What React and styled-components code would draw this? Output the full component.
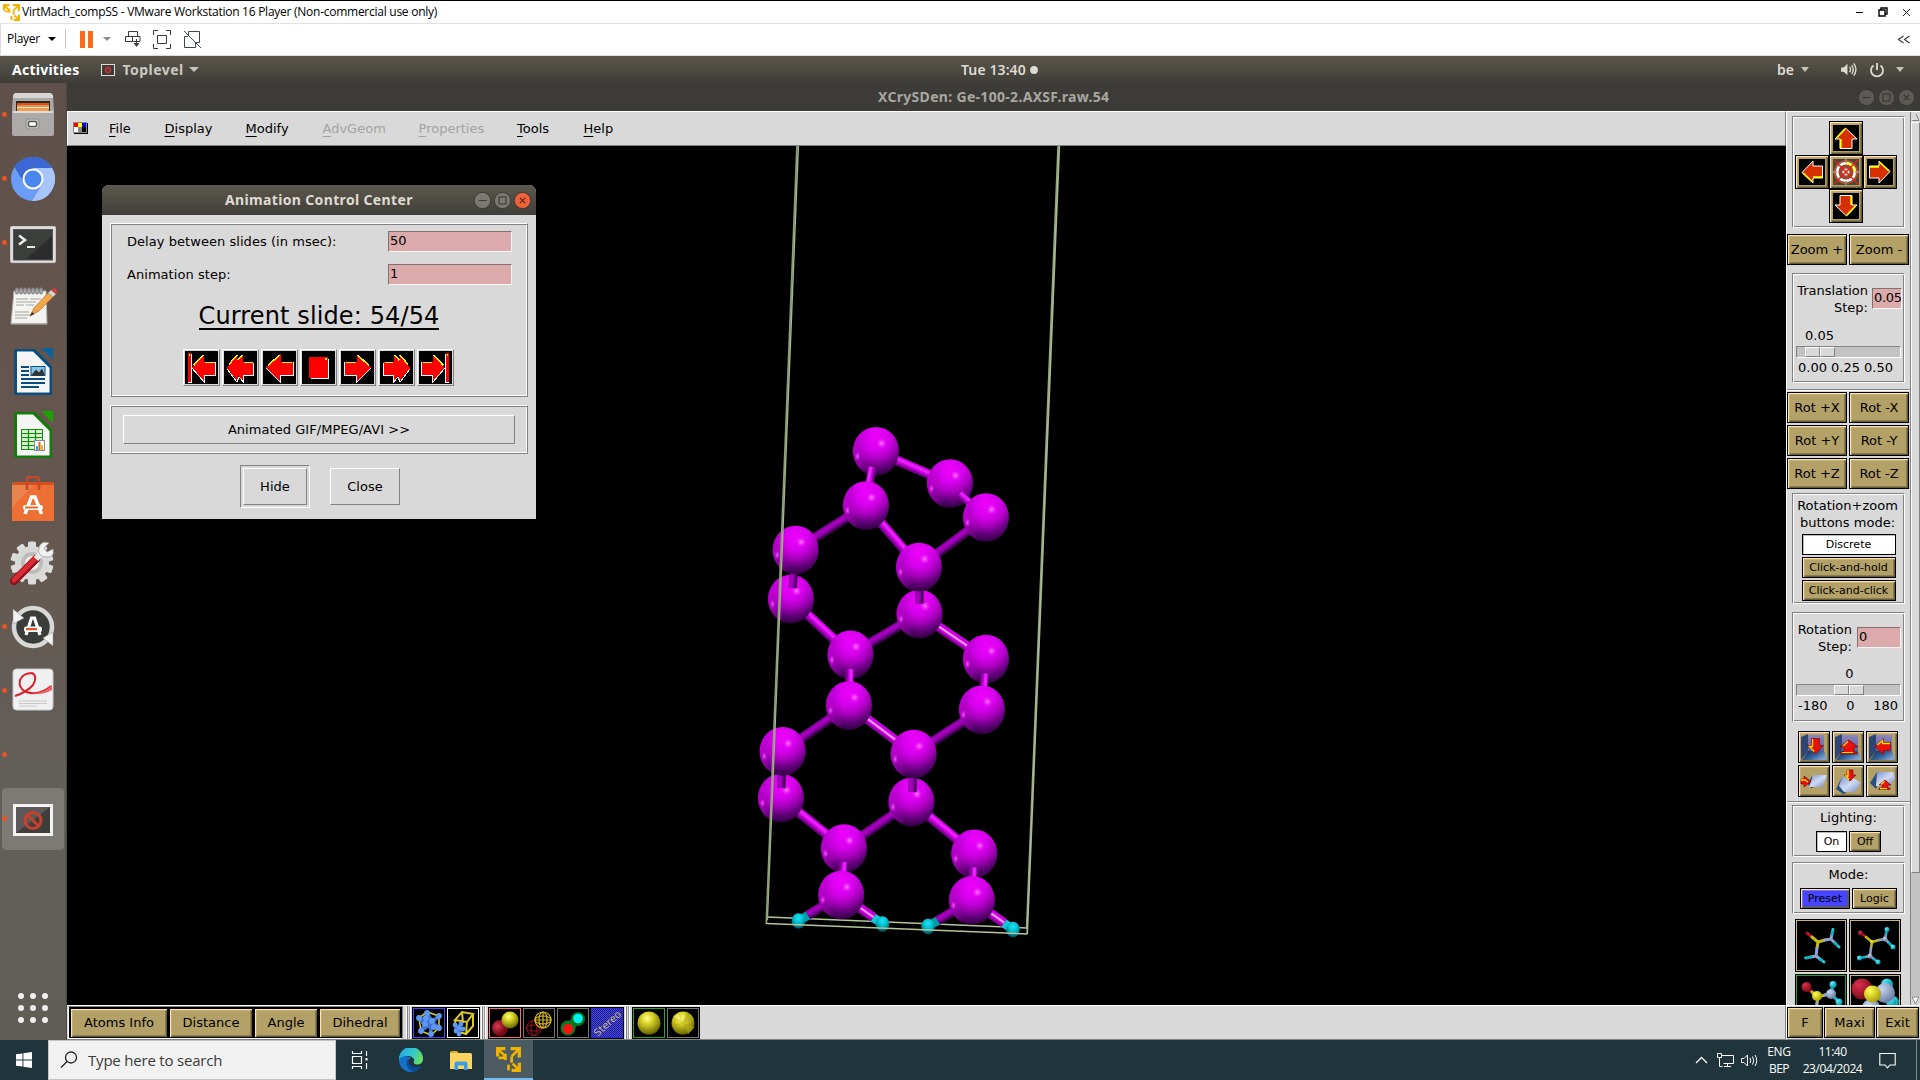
import React from "react";
import styled, { createGlobalStyle, css } from "styled-components";

const Global = createGlobalStyle`
  * { box-sizing: border-box; }
  html, body { margin: 0; padding: 0; width: 1920px; height: 1080px; overflow: hidden; background: #000; }
  svg { display: block; flex: none; }
`;

const GREY = "#d9d9d9";
const GOLD = "#b3a168";
const dejavu = `"DejaVu Sans", sans-serif`;
const segoe = `"Open Sans", "Noto Sans", sans-serif`;
const ubuntu = `"Noto Sans", "Open Sans", sans-serif`;

const Screen = styled.div`
  width: 1920px; height: 1080px; display: flex; flex-direction: column;
  border-top: 1px solid #000; font-family: ${dejavu}; font-size: 13px; color: #000; overflow: hidden;
`;
const Text = styled.span`
  font-size: ${(p) => p.$size || 13}px; letter-spacing: ${(p) => p.$ls || 0}px; white-space: pre;
  font-weight: ${(p) => p.$w || 400}; line-height: 1; color: ${(p) => p.$c || "inherit"};
  margin-left: ${(p) => p.$ml || 0}px;
`;

/* ---------- VMware host window ---------- */
const HostTitle = styled.div`
  height: 23px; flex: none; background: #fff; border-bottom: 1px solid #e2e2e2; display: flex; align-items: center;
  padding-left: 3px; font-family: ${segoe}; gap: 2px;
`;
const HostControls = styled.div`
  margin-left: auto; display: flex; align-items: center; gap: 14px; padding-right: 9px;
`;
const HostBar = styled.div`
  height: 32px; flex: none; background: #fff; border-bottom: 1px solid #dcdcdc; border-left: 1px solid #dcdcdc;
  display: flex; align-items: center; padding: 0 9px 1px 6px; font-family: ${segoe};
`;
const Caret = styled.i`
  width: 0; height: 0; border-left: ${(p) => p.$s || 4}px solid transparent; border-right: ${(p) => p.$s || 4}px solid transparent;
  border-top: ${(p) => p.$h || p.$s || 4}px solid ${(p) => p.$c || "#000"}; margin-left: ${(p) => p.$ml || 0}px; flex: none;
`;
const HostDivider = styled.div`width: 1px; height: 20px; background: #c8c8c8; margin: 0 14px 0 9px;`;
const PauseIcon = styled.div`width: 13px; height: 17px; border-left: 5px solid #ff6a1a; border-right: 5px solid #ff6a1a;`;
const HostIcon = styled.div`margin-left: ${(p) => p.$ml}px;`;
const HostExpand = styled.div`margin-left: auto;`;

/* ---------- Ubuntu shell ---------- */
const TopBar = styled.div`
  height: 27px; flex: none; background: linear-gradient(#5a564c, #3f3d38); display: grid;
  grid-template-columns: 961px 1fr auto; align-items: center; font-family: ${ubuntu}; color: #dfdbd2;
`;
const TopGroup = styled.div`display: flex; align-items: center; height: 100%; padding-right: ${(p) => p.$pr || 0}px;`;
const AppBadge = styled.svg`margin: 0 8px 0 21px;`;
const Guest = styled.div`height: 957px; flex: none; display: flex;`;
const Dock = styled.div`
  width: 67px; flex: none; background: linear-gradient(#60504b, #65564f 40%, #625f59 75%, #605d57);
  border-right: 1px solid #4a4642; display: flex; flex-direction: column; align-items: center;
`;
const DockItem = styled.div`
  width: 62px; height: 62px; margin: 1px 0; flex: none; border-radius: 4px; display: flex; align-items: center;
  justify-content: center; position: relative; background: ${(p) => (p.$active ? "#7d7974" : "transparent")};
  padding-top: ${(p) => Math.max(0, p.$dy || 0) * 2}px; padding-bottom: ${(p) => Math.max(0, -(p.$dy || 0)) * 2}px;
  ${(p) => p.$run && css`
    &::before { content: ""; position: absolute; left: 0; top: 28px; width: 5px; height: 5px; border-radius: 50%; background: #e95420; }
  `}
`;
const AppGrid = styled.div`
  display: grid; grid-template-columns: repeat(3, 6px); gap: 6px; margin: auto 0 17px;
`;
const Dot = styled.i`width: 6px; height: 6px; border-radius: 50%; background: #f0efed;`;

const MainWindow = styled.div`flex: 1; display: flex; flex-direction: column; min-width: 0;`;
const WinTitle = styled.div`
  height: 28px; flex: none; background: #3c3b37; display: grid; grid-template-columns: 811px 1fr auto;
  align-items: center; font-family: ${ubuntu}; color: #a9a79f; padding-right: 5px;
`;
const Circles = styled.div`display: flex; gap: 3px;`;
const WinBody = styled.div`flex: 1; display: flex; min-height: 0; background: ${GREY};`;
const Left = styled.div`width: 1719px; flex: none; display: flex; flex-direction: column;`;
const MenuBar = styled.div`
  height: 35px; flex: none; border: 1px solid; border-color: #fff #828282 #828282 #fff; background: ${GREY};
  display: flex; align-items: center; padding: 0 0 1px 5px;
`;
const MenuItem = styled.span`
  display: block; margin-left: ${(p) => p.$ml}px; width: ${(p) => p.$width}px; white-space: nowrap; line-height: 17px;
  color: ${(p) => (p.$off ? "#a3a3a3" : "#000")};
  &::first-letter { text-decoration: underline; text-underline-offset: 3px; text-decoration-thickness: 1px; }
`;
const Canvas = styled.div`height: 859px; flex: none; background: #000; position: relative;`;
const BottomBar = styled.div`
  height: 35px; flex: none; background: ${GREY}; border-top: 1px solid #fff; border-bottom: 1px solid #828282;
  border-right: 1px solid #828282; display: flex; align-items: flex-start;
`;
const InfoGroup = styled.div`
  display: flex; gap: 1px; border: 1px solid; border-color: #828282 #828282 #fff #fff; background: #000; height: 33px;
  padding: 1px; margin-left: 1px;
`;
const bevel = css`
  border: 1px solid #000; box-shadow: inset 1px 1px #ffe2b0, inset 2px 2px #e3c88e55, inset -1px -1px #665b36, inset -2px -2px #665b3688;
`;
const Gold = styled.div`
  ${bevel}
  background: ${(p) => p.$bg || GOLD}; width: ${(p) => p.$width}px; height: ${(p) => p.$h || 31}px; flex: none;
  display: flex; align-items: center; justify-content: center; font-size: ${(p) => p.$size || 13}px; white-space: nowrap; line-height: 1;
  padding-bottom: 1px;
  ${(p) => p.$flat && css`box-shadow: inset 1px 1px ${p.$flat}, inset -1px -1px #fff;`}
`;
const IconBtn = styled(Gold)`padding: 0; overflow: hidden;`;
const VSep = styled.div`
  width: 5px; height: 33px; margin: 0 ${(p) => p.$mr || 2}px 0 ${(p) => p.$ml || 2}px; flex: none;
  border-left: 1px solid #fff; border-right: 1px solid #fff; box-shadow: inset 1px 0 #828282, inset -1px 0 #a0a0a0;
`;
const ToolIcon = styled.div`
  width: 34px; height: 32px; margin-top: 1px; flex: none; background: ${(p) => p.$bg || "#000"}; border: 1px solid #000; outline: 1px solid ${(p) => p.$line || "#777"};
  outline-offset: -2px; display: flex; align-items: center; justify-content: center; overflow: hidden;
`;

/* ---------- Right panel ---------- */
const Right = styled.div`width: 134px; flex: none; display: flex; flex-direction: column;`;
const PanelRow = styled.div`
  height: 894px; display: flex; flex: none; overflow: hidden; border-top: 1px solid #fff;
`;
const Panel = styled.div`
  width: 125px; flex: none; border-left: 1px solid #fff; border-right: 1px solid #828282; display: flex; flex-direction: column;
`;
const Groove = styled.div`
  width: 113px; height: ${(p) => p.$h}px; margin: ${(p) => p.$mt}px 0 0 5px; flex: none; border: 1px solid;
  border-color: #828282 #fff #fff #828282; box-shadow: inset 1px 1px #fff, inset -1px -1px #828282;
  display: flex; flex-direction: column; align-items: center; padding-top: ${(p) => p.$pt || 0}px;
`;
const NavPad = styled.div`
  display: grid; grid-template-columns: repeat(3, 34px); grid-auto-rows: 34px; align-self: flex-start; margin-left: 2px;
`;
const NavBtn = styled.div`
  ${bevel}
  grid-area: ${(p) => p.$area}; background: ${GOLD}; display: flex; align-items: center; justify-content: center;
`;
const Rot = styled.div`transform: rotate(${(p) => p.$deg}deg);`;
const Pair = styled.div`display: flex; gap: 2px; margin-top: ${(p) => p.$mt || 0}px; flex: none;`;
const HSep = styled.div`height: 2px; flex: none; margin-top: ${(p) => p.$mt}px; border-top: 1px solid #828282; border-bottom: 1px solid #fff;`;
const StepRow = styled.div`display: flex; width: 107px; justify-content: space-between; align-items: center; padding-right: ${(p) => p.$pr || 0}px;`;
const StepLabel = styled.div`text-align: right; line-height: 17px; width: ${(p) => p.$width}px; padding-top: 1px;`;
const Caption = styled.div`
  text-align: center; line-height: 17px; white-space: nowrap; align-self: stretch;
  padding: 0 ${(p) => p.$pr || 0}px 0 ${(p) => p.$pl || 0}px; margin-top: ${(p) => p.$mt || 0}px;
`;
const Entry = styled.div`
  width: ${(p) => p.$width}px; height: 21px; background: #dcaaaa; border: 1px solid; border-color: #857070 #fff3f3 #fff3f3 #857070;
  padding-left: 1px; line-height: 18px; overflow: hidden; white-space: nowrap; flex: none; letter-spacing: ${(p) => p.$ls || 0}px;
`;
const Trough = styled.div`
  width: 105px; height: 12px; background: #c3c3c3; border: 1px solid; border-color: #828282 #fff #fff #828282; flex: none;
  padding-left: ${(p) => p.$at}px; display: flex; margin-top: 2px;
`;
const Knob = styled.i`
  width: 15px; height: 10px; background: ${GREY}; border: 1px solid; border-color: #fff #828282 #828282 #fff;
`;
const Ticks = styled.div`display: flex; width: ${(p) => p.$width}px; justify-content: space-between; align-self: flex-start; margin: 1px 0 0 5px; line-height: 17px;`;
const Stack = styled.div`display: flex; flex-direction: column; gap: 2px; margin-top: 3px;`;
const IconGrid = styled.div`display: grid; grid-template-columns: repeat(3, 32px); gap: 2px; margin: 9px 0 0 11px;`;
const MolGrid = styled.div`display: grid; grid-template-columns: 52px 52px; gap: 2px; margin: 5px 0 0 8px;`;
const MolCell = styled.div`
  width: 52px; height: 53px; background: #000; border: 1px solid #000; outline: 1px solid ${(p) => p.$line || "#c8b184"}; outline-offset: -2px;
`;
const Scroll = styled.div`width: 9px; flex: none; background: #c3c3c3; display: flex; flex-direction: column; height: 893px; justify-content: space-between;`;
const Thumb = styled.div`height: 751px; background: ${GREY}; border: 1px solid; border-color: #fff #828282 #828282 #fff;`;
const ExitRow = styled.div`
  height: 35px; border-top: 1px solid #fff; border-left: 1px solid #fff; border-bottom: 1px solid #828282; display: flex; gap: 1px;
  padding-top: 1px;
`;

/* ---------- Dialog ---------- */
const Dialog = styled.div`
  position: absolute; left: 35px; top: 39px; width: 434px; height: 334px; background: ${GREY}; border-radius: 7px 7px 0 0;
  display: flex; flex-direction: column; align-items: center; overflow: hidden; letter-spacing: 0.05px;
`;
const DialogTitle = styled.div`
  height: 30px; width: 100%; flex: none; background: linear-gradient(#5c584e, #403e39); display: grid; grid-template-columns: 123px 1fr auto;
  align-items: center; font-family: ${ubuntu}; color: #dfdbd2; padding-right: 5px;
`;
const Ridge = styled.div`
  width: 418px; height: ${(p) => p.$h}px; margin-top: 8px; flex: none; border: 1px solid; border-color: #fff #828282 #828282 #fff;
  box-shadow: inset 1px 1px #828282, inset -1px -1px #fff; display: flex; flex-direction: column; align-items: center; padding-top: ${(p) => p.$pt}px;
`;
const Field = styled.div`
  width: 386px; padding-left: 1px; display: flex; justify-content: space-between; align-items: center; margin-bottom: 12px; height: 21px;
`;
const Current = styled.div`
  font-size: 24px; line-height: 28px; height: 28px; margin-top: 5px; border-bottom: 2px solid #000; white-space: nowrap; letter-spacing: 0.12px;
`;
const Player = styled.div`display: flex; gap: 2px; margin-top: 19px; padding-right: 2px;`;
const Raised = styled.div`
  border: 1px solid; border-color: #fff #828282 #828282 #fff; width: ${(p) => p.$width}px; height: ${(p) => p.$h}px;
  display: flex; align-items: center; justify-content: center; background: ${GREY}; flex: none; padding-bottom: ${(p) => p.$pb || 0}px;
`;
const DefaultRing = styled.div`
  width: 70px; height: 43px; border: 1px solid; border-color: #828282 #fff #fff #828282; display: flex; align-items: center; justify-content: center;
`;
const DialogActions = styled.div`display: flex; gap: 20px; align-items: center; width: 100%; padding-left: 138px; margin-top: 11px;`;

/* ---------- Windows taskbar ---------- */
const Taskbar = styled.div`
  height: 40px; flex: none; background: #20343b; display: flex; font-family: ${segoe}; color: #fff; align-items: stretch;
`;
const TaskCell = styled.div`
  width: ${(p) => p.$width || 48}px; display: flex; align-items: center; justify-content: center; flex: none;
  ${(p) => p.$on && css`background: #4b5b61; border-bottom: 2px solid #76b9ed;`}
`;
const Search = styled.div`
  width: 288px; background: #f2f2f2; border: 1px solid #c6c6c6; display: flex; align-items: center; gap: 10px; padding-left: 11px; color: #3a3a3a; flex: none;
`;
const Tray = styled.div`margin-left: auto; display: flex; align-items: center; padding-right: 3px;`;
const TrayCell = styled.div`
  width: ${(p) => p.$width}px; display: flex; flex-direction: column; align-items: center; gap: 5px; flex: none; justify-content: center;
`;
const ShowDesk = styled.div`width: 1px; height: 40px; background: #7b888c; margin-left: 9px;`;

/* ---------- drawings ---------- */
const VmLogo = ({ size }) => (
  <svg width={size} height={size} viewBox="0 0 24 24" fill="none" stroke="#f0b400" strokeWidth="3.2">
    <path d="M1.6 9V1.6H9M14 1.6h8.4V10M22.4 15v7.4H15" />
    <path d="M2 2l7 7M22 2l-7 7M22 22l-6-6M9 12.5V6.5M8 10.5H2.5M15 9v6" strokeWidth="2.6" />
    <path d="M12 17v5.5" strokeWidth="2.6" />
  </svg>
);

const WinCircle = ({ kind, bg, fg }) => (
  <svg width="17" height="17" viewBox="0 0 17 17">
    <circle cx="8.5" cy="8.5" r="8.1" fill={bg} stroke="#33322e" strokeWidth=".8" />
    <g stroke={fg} fill="none" strokeWidth="1.1">
      {kind === "min" && <path d="M4.5 8.5h8" />}
      {kind === "max" && <rect x="5" y="5" width="7" height="7" />}
      {kind === "close" && <path d="M5.8 5.8l5.4 5.4M11.2 5.8l-5.4 5.4" />}
    </g>
  </svg>
);

const Speaker = () => (
  <svg width="17" height="17" viewBox="0 0 16 16">
    <path d="M1 6h2.5L7 2.5v11L3.5 10H1z" fill="#dfdbd2" />
    <path d="M9 5.500q2 2.500 0 5M11 3.800q3 4.200 0 8.400M13 2.200q4 5.800 0 11.600" fill="none" stroke="#dfdbd2" strokeWidth="1.3" />
  </svg>
);

const arrowPaths = {
  one: { p: "3,16.5 17.5,3 17.5,10.5 29.5,10.5 29.5,24 17.5,24 17.5,31", y: "M5 14.5L16.5 4M18.5 11.5H28.5", w: "M3 17l14.5 14.5V24.5H30V11" },
  two: { p: "3,17 13,3.5 13,10 19,3.5 19,11 29,11 29,24 19,24 19,30 14.5,25 13.5,30", y: "M5 13.5L13 4M13.5 9.5L18.5 4M20 11.5H28.5", w: "M3 18l10 13 2-5 4.5 5V24.5H29.5V12" },
  end: { p: "7.5,16.5 19,3 19,10.5 30,10.5 30,24 19,24 19,31", y: "M8.5 14.5L18.5 4M20 11.5H29.5", w: "M7 17l12.5 14.5V24.5H30.5V11" },
};
const PlayArrow = ({ kind, flip }) => {
  const a = arrowPaths[kind];
  return (
    <svg width="33" height="33" viewBox="0 0 33 33" shapeRendering="crispEdges">
      <rect width="33" height="33" fill="#000" />
      {kind === "stop" ? (
        <g>
          <path d="M26.5 8V27.5H8.5" stroke="#fff" fill="none" strokeWidth="1.5" />
          <rect x="7" y="6" width="19" height="21" fill="#fe0000" />
          <rect x="23" y="7" width="2" height="2" fill="#ff0" />
        </g>
      ) : (
        <g transform={flip ? "translate(33 0) scale(-1 1)" : undefined}>
          {kind === "end" && (
            <g>
              <rect x="3" y="2" width="3" height="29" fill="#fe0000" />
              <path d="M6.5 3V31.5H3" stroke="#fff" fill="none" />
              <rect x="4" y="3" width="1" height="2" fill="#ff0" />
            </g>
          )}
          <polygon points={a.p} fill="#fe0000" />
          <path d={a.w} stroke="#fff" fill="none" />
          <path d={a.y} stroke="#ff0" fill="none" strokeWidth="1.5" />
        </g>
      )}
    </svg>
  );
};

const NavArrow = () => (
  <svg width="26" height="26" viewBox="4 4 26 26">
    <rect x="4" y="4" width="26" height="26" fill="#000" />
    <polygon points="16.5,7 6,18 11,18 11,27.5 23,27.5 23,18 28,18" fill="#d63000" stroke="#fff" strokeWidth="1" />
    <path d="M16 8L7.5 17M11.8 18V27" stroke="#ff0" strokeWidth="1.7" />
  </svg>
);
const Target = () => (
  <svg width="26" height="26" viewBox="0 0 26 26">
    <rect width="26" height="26" fill="#4a4438" />
    <circle cx="13" cy="13" r="11.5" fill="#77705f" stroke="#d63a20" strokeWidth="1.2" />
    <circle cx="13" cy="13" r="8.8" fill="none" stroke="#fff" strokeWidth="2.6" />
    <path d="M13 4.200a8.800 8.800 0 0 1 8.800 8.800" fill="none" stroke="#ff3" strokeWidth="2.6" />
    <circle cx="13" cy="13" r="6.6" fill="#6a6252" stroke="#d02a18" strokeWidth="1.3" />
    <circle cx="13" cy="13" r="4.2" fill="#eee8dd" stroke="#d02a18" strokeWidth="1.3" />
    <path d="M1 1l24 24M25 1L1 25" stroke="#d02a18" strokeWidth="1.6" />
    <path d="M13 0v4M13 22v4M0 13h4M22 13h4" stroke="#999" strokeWidth="1.3" />
  </svg>
);

const RoomIcon = ({ dir }) => (
  <svg width="26" height="26" viewBox="0 0 26 26">
    <defs>
      <linearGradient id="floor" x1="0" y1="0" x2="1" y2=".6"><stop offset="0" stopColor="#0e2444" /><stop offset=".6" stopColor="#38649c" /><stop offset="1" stopColor="#7fa4d4" /></linearGradient>
      <linearGradient id="wall" x1="0" y1="0" x2="0" y2="1"><stop offset="0" stopColor="#8a88bd" /><stop offset="1" stopColor="#5c5c98" /></linearGradient>
    </defs>
    <path d="M0 3L7 0V17L0 26z" fill="#2d4674" />
    <path d="M7 1H23V18H7z" fill="url(#wall)" />
    <path d="M7 17H23L26 26H1z" fill="url(#floor)" />
    {dir === "up" ? (
      <g>
        <path d="M14 6l9 7h-4v5h3v2H6v-2h3v-5H5z" fill="#e8120a" stroke="#600" strokeWidth=".6" />
        <path d="M13 7.500l-5 4.500M7 18.500h11" stroke="#ffe000" strokeWidth="1.100" fill="none" />
      </g>
    ) : (
      <g transform={dir === "left" ? "rotate(90 14 12)" : undefined}>
        <path d="M10.500 4.500h8v7h4l-8 8.500-8-8.500h4z" fill="#e8120a" stroke="#700" strokeWidth=".6" />
        <path d="M11.500 5v7.500H8.500l4.500 5" stroke="#ffe000" strokeWidth="1.300" fill="none" />
      </g>
    )}
  </svg>
);
const SlabIcon = ({ kind }) => (
  <svg width="28" height="26" viewBox="0 0 28 26">
    <defs>
      <linearGradient id="slab" x1="0" y1="0" x2="1" y2="1"><stop offset="0" stopColor="#7e94cc" /><stop offset=".5" stopColor="#cfdaf4" /><stop offset="1" stopColor="#6f86bc" /></linearGradient>
    </defs>
    {kind === "right" && <g><path d="M12 8l-4 8 3 4 3-1z" fill="#1d3558" /><path d="M13 7h14l-4 12H9z" fill="url(#slab)" /></g>}
    {kind === "down" && <g><path d="M8 9L2 21l7 5 3-1z" fill="#27507c" /><path d="M8 9h10l9 6-6 9H10l-5-6z" fill="url(#slab)" /></g>}
    {kind === "up" && <g><path d="M9 4L2 15l6 6 3-7z" fill="#27507c" /><path d="M9 4h16l2 6-5 8H8z" fill="url(#slab)" /></g>}
    {kind === "right" && <g><path d="M1 11h3V8l7 5.500-7 5.500v-3H1z" fill="#e8120a" stroke="#700" strokeWidth=".6" /><path d="M1 12h4l3 2" stroke="#ffe000" strokeWidth="1.300" fill="none" /></g>}
    {kind === "down" && <g><path d="M13 2h6v5h3l-6 6-6-6h3z" fill="#e8120a" stroke="#700" strokeWidth=".6" /><path d="M14 2v6h-2l3 3.500" stroke="#ffe000" strokeWidth="1.500" fill="none" /></g>}
    {kind === "up" && <g><path d="M11 17l6-5 6 5h-3v3h2v1.500H11V20h3v-3z" fill="#e8120a" stroke="#700" strokeWidth=".6" /><path d="M13 16.500l3.500-3M12 20.700h7" stroke="#ffe000" strokeWidth="1.300" /></g>}
  </svg>
);

const Ball = ({ x, y, r, c }) => <circle cx={x} cy={y} r={r} fill={`url(#mb-${c})`} />;
const MolIcon = ({ s }) => {
  const tip = [1.2, 2.5, 3.5, 6][s];
  return (
    <svg width="50" height="51" viewBox="0 0 50 51">
      <defs>
        {[["red", "#d8304c", "#7a0818"], ["yel", "#ffff50", "#a89c08"], ["blu", "#c8d6f2", "#6478a0"], ["cya", "#60f4ff", "#008ca0"]].map(([n, a, b]) => (
          <radialGradient id={"mb-" + n} key={n} cx=".35" cy=".3" r=".75"><stop offset="0" stopColor={a} /><stop offset="1" stopColor={b} /></radialGradient>
        ))}
      </defs>
      <g strokeWidth={s === 1 ? 2.5 : 3} strokeLinecap="round" fill="none">
        <path d="M11 13L16 17" stroke="#b0142c" /><path d="M16 17L22 22 21 28M22 22L29 20" stroke="#c6bb14" />
        <path d="M21 28L20 36M29 20L35 19M20 36L15 37M20 36L24 39M35 19L36 14M35 19L39 23" stroke="#8fa4d0" />
        <path d="M15 37L10 38M24 39L28 42M36 14L37 9.500M39 23L43 27" stroke="#10b4c4" />
      </g>
      <Ball x={37} y={9.5} r={tip} c="cya" /><Ball x={43} y={27} r={tip} c="cya" /><Ball x={9.5} y={38} r={tip} c="cya" /><Ball x={28} y={42} r={tip} c="cya" />
      {s === 3 && (
        <g><Ball x={41} y={27} r={5} c="cya" /><Ball x={36} y={11} r={5} c="cya" /><Ball x={35} y={18} r={10} c="blu" /><Ball x={12} y={14} r={10.5} c="red" /><Ball x={21} y={33} r={9} c="blu" /><Ball x={22.5} y={19} r={8.5} c="yel" /></g>
      )}
      {s === 2 && <g><Ball x={10.5} y={12} r={5} c="red" /><Ball x={35} y={19} r={5} c="blu" /><Ball x={21} y={21} r={5} c="yel" /><Ball x={20} y={36} r={5} c="blu" /></g>}
      {s === 1 && <g><Ball x={10.5} y={13} r={2.5} c="red" /><Ball x={35} y={19} r={2.5} c="blu" /><Ball x={22} y={22} r={2} c="yel" /><Ball x={20} y={36} r={2.5} c="blu" /></g>}
    </svg>
  );
};

/* Atoms and bonds of the slab, in screen pixels */
const atoms = {
  A: [876, 451.3], B: [950, 483.5], C: [986, 517.5], D: [866, 505.5], E: [795.7, 550], F: [919, 567], G: [791, 599], H: [919.5, 614],
  I: [850.5, 654.7], J: [986, 659], K: [849, 705.5], L: [982, 709.7], M: [782.7, 751.3], N: [913.7, 754], O: [781, 798], P: [911.5, 802],
  Q: [844, 848.5], R: [974.3, 853.7], S: [841.3, 895], T: [972, 900.3],
};
const hydrogens = [[798.5, 921, "S", 0], [882.5, 924, "S", 1], [928, 926.5, "T", 0], [1013, 929.5, "T", 1]];
const backBonds = [["A", "B", 1], ["D", "E", 0], ["D", "F", 1], ["C", "F", 0], ["G", "I", 1], ["H", "I", 0], ["H", "J", 2], ["K", "M", 0], ["K", "N", 2], ["L", "N", 0], ["O", "Q", 1], ["P", "Q", 0], ["P", "R", 1]];
/* [atom whose face the bond crosses, atom that hides its other end, inner start, tone] */
const frontBonds = [
  ["A", "D", [872.5, 467], 1], ["B", "C", [959.5, 494], 1], ["G", "E", [792.7, 588], 0], ["H", "F", [919.8, 603.5], 0], ["I", "K", [849.5, 669], 1],
  ["J", "L", [984.3, 673.5], 1], ["O", "M", [781.5, 788], 0], ["P", "N", [912.5, 792], 0], ["Q", "S", [843, 862], 1], ["R", "T", [973, 867.5], 1],
];
const tones = [["#470058", "#8600a0", "#a800be"], ["#7a0090", "#c400da", "#ea20ff"], ["#8a009c", "#d000e4", "#f79cff"]];
const Bond = ({ a, b, tone, w = 9.5 }) => {
  const [d, m, l] = tones[tone];
  const len = Math.hypot(b[0] - a[0], b[1] - a[1]);
  let nx = (b[1] - a[1]) / len, ny = -(b[0] - a[0]) / len;
  if (ny > 0.1) { nx = -nx; ny = -ny; }
  const seg = (o, c, sw) => (
    <line x1={a[0] + nx * o} y1={a[1] + ny * o} x2={b[0] + nx * o} y2={b[1] + ny * o} stroke={c} strokeWidth={sw} />
  );
  return <g>{seg(0, d, w)}{seg(1.2, m, w - 2.5)}{seg(tone === 2 ? 0.5 : 1.6, l, tone === 2 ? 2 : 3)}</g>;
};
const Atom = ({ c: [x, y] }) => (
  <g>
    <ellipse cx={x} cy={y} rx="23" ry="24.3" fill="url(#ge)" />
    <ellipse cx={x} cy={y} rx="23" ry="24.3" fill="url(#geSide)" />
    <circle cx={x + 5.5} cy={y - 8} r="5.5" fill="url(#geSpot)" />
    <ellipse cx={x - 18.5} cy={y + 5} rx="3" ry="5" fill="url(#geSpot)" opacity=".8" />
  </g>
);
const Crystal = () => (
  <svg width="1719" height="859" viewBox="67 146 1719 859">
    <defs>
      <radialGradient id="ge" cx=".5" cy=".22" r=".8">
        <stop offset="0" stopColor="#ee00fc" /><stop offset=".34" stopColor="#d800ee" /><stop offset=".56" stopColor="#ac00c0" />
        <stop offset=".78" stopColor="#62007a" /><stop offset="1" stopColor="#2c003c" />
      </radialGradient>
      <linearGradient id="geSide"><stop offset="0" stopColor="#c400da" stopOpacity=".8" /><stop offset=".35" stopColor="#b000c4" stopOpacity="0" /></linearGradient>
      <radialGradient id="geSpot"><stop offset="0" stopColor="#ff80ff" /><stop offset="1" stopColor="#f010ff" stopOpacity="0" /></radialGradient>
      <radialGradient id="hy" cx=".5" cy=".3" r=".7"><stop offset="0" stopColor="#20e4f4" /><stop offset=".5" stopColor="#00bccc" /><stop offset="1" stopColor="#004c5c" /></radialGradient>
    </defs>
    <g stroke="#94a57c" strokeWidth="1.5">
      <path d="M767.5 917L1027 928" stroke="#b4c69a" /><path d="M1058 146L1026.5 929" />
    </g>
    {backBonds.map(([a, b, t]) => <Bond key={a + b} a={atoms[a]} b={atoms[b]} tone={t} />)}
    {hydrogens.map(([x, y, o, t]) => {
      const s = atoms[o];
      const q = [x + (s[0] - x) * 0.22, y + (s[1] - y) * 0.22];
      return (
        <g key={x}>
          <Bond a={s} b={q} tone={t * 2} />
          <line x1={q[0]} y1={q[1]} x2={x} y2={y} stroke={t ? "#10c8d8" : "#009cac"} strokeWidth="9" />
          <ellipse cx={x} cy={y} rx="6.8" ry="7.8" fill="url(#hy)" />
        </g>
      );
    })}
    {frontBonds.map(([over, hide, p, t]) => (
      <g key={over + hide}>
        <Atom c={atoms[over]} />
        <Bond a={p} b={atoms[hide]} tone={t} w={8} />
      </g>
    ))}
    {["D", "C", "E", "F", "K", "L", "M", "N", "S", "T"].map((k) => <Atom key={k} c={atoms[k]} />)}
    <g strokeWidth="1.5" fill="none">
      <path d="M798.300 146L767.300 920" stroke="#a9ba92" />
      <path d="M797 146L766.300 924" stroke="#8c9f78" strokeWidth="1.8" />
      <path d="M1059.300 146L1027.200 934" stroke="#a9ba92" strokeWidth="1.8" />
      <path d="M766.500 923.500L1027.500 934" stroke="#b4c69a" />
    </g>
  </svg>
);

/* Dock icons */
const dockIcons = {
  files: (
    <svg width="44" height="46" viewBox="0 0 44 46">
      <path d="M2 3Q3 1 5 1H39Q41 1 42 3L43 19V42Q43 44 41 44H3Q1 44 1 42V19z" fill="#aaa9a7" />
      <path d="M2 4Q3 1 5 1H39Q41 1 42 4V6H2z" fill="#d6d6d4" />
      <rect x="5" y="9" width="34" height="12" fill="#2c2622" />
      <rect x="6" y="11" width="32" height="2" fill="#d8531c" /><rect x="6" y="13" width="32" height="1.500" fill="#f08a3c" /><rect x="6" y="14.500" width="32" height="1.500" fill="#ffdfb0" /><rect x="6" y="16" width="32" height="3" fill="#f09a50" />
      <path d="M2 19H42V42Q42 43.500 40 43.500H4Q2 43.500 2 42z" fill="#acaba9" /><path d="M2 19H42V21H2z" fill="#dcdcda" />
      <rect x="15" y="27" width="13" height="10" rx="3" fill="#c9c8c6" stroke="#908f8d" />
      <rect x="17.500" y="29.500" width="8" height="5" rx="1" fill="#fff" stroke="#555" strokeWidth="1.500" />
    </svg>
  ),
  chromium: (
    <svg width="44" height="44" viewBox="0 0 44 44">
      <circle cx="22" cy="22" r="22" fill="#6a9df6" />
      <path d="M3.500 10A22 22 0 0 1 41 11L22 12Q13 14 12 24z" fill="#3b68d2" />
      <path d="M22 11H41A22 22 0 0 1 21 44L32 26z" fill="#a8c5fb" />
      <circle cx="22" cy="22" r="10.500" fill="#fff" /><circle cx="22" cy="22" r="8.500" fill="#4a86f0" />
    </svg>
  ),
  terminal: (
    <svg width="46" height="38" viewBox="0 0 46 38">
      <rect x="0" y="0" width="46" height="37" rx="2" fill="#ddd" stroke="#888" strokeWidth=".5" />
      <rect x="3.500" y="3.500" width="39" height="30.500" fill="#2b2c2b" stroke="#555" />
      <path d="M4 4H42V10L16 33H4z" fill="#3c3e3c" />
      <path d="M9 9.500l6 4.500-6 4.500" stroke="#e8e8e8" strokeWidth="2.600" fill="none" /><path d="M17 21h8" stroke="#e8e8e8" strokeWidth="2" />
    </svg>
  ),
  gedit: (
    <svg width="48" height="40" viewBox="0 0 48 40">
      <path d="M5 4H37L38 37H2z" fill="#f3f3f0" stroke="#b5b5b0" />
      <path d="M2 36.500H38V38H2z" fill="#8c8c86" />
      <g stroke="#888" strokeWidth="1.600">{[7, 11, 15, 19, 23, 27, 31].map((x) => <ellipse key={x} cx={x + 1} cy="4" rx="1.200" ry="2.800" fill="#ddd" />)}</g>
      <path d="M7 12h12M21 12h11M7 15h20M7 18h8M17 18h8M6 25h14M6 28h16M6 31h12" stroke="#a5a5a2" strokeWidth="1.200" />
      <path d="M21 29L25 21 39 6 44 10 30 24z" fill="#f2a54a" stroke="#a3631c" strokeWidth=".6" />
      <path d="M39 6l3-3 5 4-3 3z" fill="#d2d2d2" /><path d="M42 3q3-3 5-1t0 5z" fill="#e0393e" /><path d="M21 29l2-4 2.500 2z" fill="#333" />
    </svg>
  ),
  writer: (
    <svg width="40" height="48" viewBox="0 0 40 48">
      <path d="M3 1H22L39 18V45Q39 47 37 47H3Q1 47 1 45V3Q1 1 3 1z" fill="#0a4f80" /><path d="M28 0H40V12z" fill="#0b6299" />
      <path d="M4 3.500H20L36.500 20V44.500H4z" fill="#f5f5f5" />
      <path d="M8 19h8M8 23h8M8 27h8M8 31h24M8 35h24M8 39h18" stroke="#0a4f80" strokeWidth="2" />
      <rect x="18" y="18.500" width="14" height="9" fill="#88c5ee" stroke="#0a4f80" /><path d="M18 27.500l5-6 3 3 3-4 3 7z" fill="#333" />
    </svg>
  ),
  calc: (
    <svg width="40" height="48" viewBox="0 0 40 48">
      <path d="M3 1H22L39 18V45Q39 47 37 47H3Q1 47 1 45V3Q1 1 3 1z" fill="#127c0a" /><path d="M28 0H40V12z" fill="#18a303" />
      <path d="M4 3.500H20L36.500 20V44.500H4z" fill="#f5f5f5" />
      <rect x="8.500" y="18.500" width="21" height="20" fill="#d5f0cf" stroke="#148a0a" /><path d="M9 22.500h21M9 26.500h21M9 30.500h21M9 34.500h21M15.500 19v19M22.500 19v19" stroke="#148a0a" strokeWidth="1.200" />
      <rect x="21.500" y="29.500" width="10" height="10" fill="#fff" stroke="#888" /><path d="M24 39v-4" stroke="#2aa1e0" strokeWidth="2" /><path d="M26.500 39v-8" stroke="#e06010" strokeWidth="2" /><path d="M29 39v-5" stroke="#f0b020" strokeWidth="2" />
    </svg>
  ),
  software: (
    <svg width="44" height="46" viewBox="0 0 44 46">
      <path d="M1 7H43L43 45H1z" fill="#ee6f34" /><path d="M1 9L3 6H41L43 9z" fill="#d4501e" /><path d="M1 9L22 9 1 32z" fill="#e59a68" opacity=".5" />
      <path d="M16 14V4Q16 1 19 1H25Q28 1 28 4V14" fill="none" stroke="#c8472a" strokeWidth="2.600" />
      <path d="M14 38l6.500-17h3.500l6.500 17" fill="none" stroke="#fff" strokeWidth="3.500" /><rect x="12" y="29" width="20" height="5" rx="2.500" fill="#fff" /><rect x="14" y="30.500" width="13" height="2" fill="#ec6a2e" />
    </svg>
  ),
  settings: (
    <svg width="46" height="46" viewBox="0 0 46 46">
      <g transform="translate(22 23)">
        {[0, 36, 72, 108, 144, 180, 216, 252, 288, 324].map((d) => <rect key={d} x="-4" y="-21.500" width="8" height="9" rx="1.500" fill="#dcdcda" transform={`rotate(${d})`} />)}
        <circle r="17" fill="#d9d9d7" /><circle r="11" fill="#bcbcba" /><circle r="7" fill="#f0f0ef" />
      </g>
      <path d="M4 41L26 19" stroke="#8f0e1a" strokeWidth="8" strokeLinecap="round" /><path d="M4 40L25 19" stroke="#d92c34" strokeWidth="5" strokeLinecap="round" />
      <path d="M26 19L32 12" stroke="#e9e9e8" strokeWidth="6" /><path d="M39 3Q31 0 29 8T36 17 43 9L37 12 34 8z" fill="#f1f1f0" stroke="#999" strokeWidth=".7" />
    </svg>
  ),
  updater: (
    <svg width="44" height="46" viewBox="0 0 44 46">
      <circle cx="22" cy="23" r="18" fill="#3b3d3a" /><circle cx="22" cy="23" r="19" fill="none" stroke="#d8d8d6" strokeWidth="4.500" />
      <path d="M2 5L2 20 13 14zM42 42L42 28 32 34z" fill="#f2f2f0" stroke="#888" strokeWidth=".5" />
      <path d="M15 31l5.500-17h3l5.500 17" fill="none" stroke="#fff" strokeWidth="3.200" /><rect x="13" y="22.500" width="18" height="5.500" rx="2" fill="#fff" /><rect x="15" y="24" width="11" height="2.200" fill="#e95420" />
    </svg>
  ),
  evince: (
    <svg width="42" height="43" viewBox="0 0 42 43">
      <rect x="1" y="1" width="40" height="41" rx="3.500" fill="#f0f0f0" stroke="#c8c8c8" />
      <path d="M3 28Q15 24 21 17 26 8 20 5 11 5 8 12 6 20 14 24 28 28 39 18" stroke="#d8222c" strokeWidth="2" fill="none" /><path d="M18 25Q30 27 40 17V22Q30 28 18 25z" fill="#e8656a" />
      <path d="M7 33h28M7 35.500h28M7 38h18" stroke="#c8c8c8" />
    </svg>
  ),
  none: (
    <svg width="40" height="32" viewBox="0 0 40 32">
      <rect width="40" height="32" fill="#f3f3f3" /><rect x="3" y="3" width="34" height="26" fill="#3f3e3d" /><path d="M3 3H37L3 29z" fill="#5b5a59" />
      <circle cx="20" cy="16.500" r="8" fill="none" stroke="#c8402e" strokeWidth="3" /><path d="M14.500 11l11 11" stroke="#c8402e" strokeWidth="3" />
    </svg>
  ),
};

/* [icon, running, active, vertical shift] */
const dock = [["files", 1], ["chromium", 1], ["terminal", 1, 0, 1.5], ["gedit"], ["writer", 0, 0, 0.5], ["calc"], ["software"], ["settings", 0, 0, -0.5], ["updater", 1, 0, -0.5], ["evince", 1, 0, -1.5], [null, 1], ["none", 1, 1, 0.5]];

/* [label, gap before, width, disabled] */
const menus = [["File", 21, 24], ["Display", 31.5, 49], ["Modify", 32, 45], ["AdvGeom", 32, 64, 1], ["Properties", 32, 66, 1], ["Tools", 32.5, 36], ["Help", 30.5, 32]];

const CubeIcon = ({ full }) => (
  <svg width="30" height="29" viewBox="0 0 30 29">
    {full ? (
      <g>
        <path d="M5 9L13 3 25 7 18 12zM5 9L7 22 17 26 25 19 25 7M18 12L17 26" stroke="#d8c828" strokeWidth="1.600" fill="none" />
        <path d="M5 9L18 12 25 7M5 9L16 16 25 19M7 22L18 12M13 3L16 16 17 26M7 22L16 16 25 7M13 3L18 12 25 19M5 9L10 16 7 22" stroke="#3a72d4" strokeWidth="3" fill="none" />
        {[[5, 9], [13, 4], [25, 7], [25, 19], [7, 22], [17, 25], [18, 12], [11, 15], [20, 18], [12, 9]].map(([x, y]) => <circle key={x + "," + y} cx={x} cy={y} r="2.900" fill="#5f97f2" />)}
      </g>
    ) : (
      <g>
        <path d="M7 11L14 3 25 5 19 13zM7 11L8 22 18 25 25 17 25 5M19 13L18 25M14 3L15 14" stroke="#d8c828" strokeWidth="2" fill="none" />
        <path d="M7 15L13 16 15 21 10 25 6 22z" fill="#3a72d4" />
        {[[7, 16], [13, 15], [15, 20], [8, 22], [11, 25], [11, 19]].map(([x, y]) => <circle key={x + "," + y} cx={x} cy={y} r="2.400" fill="#5f97f2" />)}
      </g>
    )}
  </svg>
);

export default function App() {
  return (
    <>
      <Global />
      <Screen>
        <HostTitle>
          <VmLogo size={17} />
          <Text $size={12} $ls={-0.26}>VirtMach_compSS - VMware Workstation 16 Player (Non-commercial use only)</Text>
          <HostControls>
            <svg width="8" height="10"><path d="M0 5.500h7" stroke="#000" /></svg>
            <svg width="10" height="10"><path d="M1 3h6v6H1zM3 3V1h6v6H7" stroke="#000" fill="none" strokeWidth="1.400" /></svg>
            <svg width="9" height="9"><path d="M1 1l7 7M8 1L1 8" stroke="#222" strokeWidth="1" /></svg>
          </HostControls>
        </HostTitle>
        <HostBar>
          <Text $size={12} $ls={-0.3}>Player</Text>
          <Caret $ml={8} />
          <HostDivider />
          <PauseIcon />
          <Caret $ml={10} $c="#8c8c8c" />
          <HostIcon $ml={13}>
            <svg width="18" height="18" fill="none" stroke="#3a3a3a"><path d="M4.500 1.500h9v5h-9zM1.500 6.500h7v5h-7zM8.500 6.500h7.500v5H8.500M12.500 9v6" /><path d="M9.500 13h6l-3 4z" fill="#3a3a3a" stroke="none" /></svg>
          </HostIcon>
          <HostIcon $ml={11}>
            <svg width="18" height="19" fill="none" stroke="#3a3a3a"><path d="M.500 5V.500H5M13 .500h4.500V5M17.500 14v4.500H13M5 18.500H.500V14M4.500 5.500h9v8h-9z" /></svg>
          </HostIcon>
          <HostIcon $ml={12}>
            <svg width="19" height="19" fill="none" stroke="#3c4650"><path d="M5.500 5V1.500h11v11h-4M5 6.500H1.500v11h11V12M1 1l17 17" /></svg>
          </HostIcon>
          <HostExpand>
            <svg width="14" height="9" fill="none" stroke="#2f3b48" strokeWidth="1.200"><path d="M6.500 1L1.500 4.500l5 3.500M12.500 1l-5 3.500 5 3.500" /></svg>
          </HostExpand>
        </HostBar>

        <TopBar>
          <TopGroup>
            <Text $size={14} $w={700} $c="#fff" $ml={12} $ls={0.25}>Activities</Text>
            <AppBadge width="14" height="12" viewBox="0 0 14 12"><rect width="14" height="12" fill="#ddd" /><rect x="1" y="1" width="12" height="10" fill="#3c3b3a" /><circle cx="7" cy="6" r="2.500" stroke="#d03030" fill="none" strokeWidth="1.300" /><path d="M5.500 4.500l3 3" stroke="#d03030" /></AppBadge>
            <Text $size={14} $w={700} $c="#ccc9c0" $ls={0.45}>Toplevel</Text>
            <Caret $ml={5} $s={5} $c="#c6c3bb" />
          </TopGroup>
          <TopGroup>
            <Text $size={14} $w={600} $ls={0.1}>Tue 13:40</Text>
            <svg width="12" height="8"><circle cx="8" cy="4" r="3.900" fill="#dfdbd2" /></svg>
          </TopGroup>
          <TopGroup $pr={16}>
            <Text $size={14} $w={600}>be</Text>
            <Caret $ml={7} $s={4.5} $h={5} $c="#c6c3bb" />
            <svg width="49" height="17" viewBox="0 0 49 17"><g transform="translate(31 0)"><Speaker /></g></svg>
            <svg width="28" height="16" viewBox="-11 0 28 16" fill="none" stroke="#dfdbd2" strokeWidth="1.800"><path d="M4.500 3.500a6 6 0 1 0 7 0M8 1v7" /></svg>
            <Caret $ml={10} $s={4.5} $h={5} $c="#c6c3bb" />
          </TopGroup>
        </TopBar>

        <Guest>
          <Dock>
            {dock.map(([k, run, act, dy], i) => <DockItem key={i} $run={run} $active={act} $dy={dy}>{k && dockIcons[k]}</DockItem>)}
            <AppGrid>{Array.from({ length: 9 }, (_, i) => <Dot key={i} />)}</AppGrid>
          </Dock>
          <MainWindow>
            <WinTitle>
              <span />
              <Text $size={14} $w={700} $ls={0.31}>XCrySDen: Ge-100-2.AXSF.raw.54</Text>
              <Circles>
                <WinCircle kind="min" bg="#5b5a55" fg="#36352f" /><WinCircle kind="max" bg="#5b5a55" fg="#36352f" /><WinCircle kind="close" bg="#5b5a55" fg="#36352f" />
              </Circles>
            </WinTitle>
            <WinBody>
              <Left>
                <MenuBar>
                  <svg width="15" height="12" shapeRendering="crispEdges">
                    <rect x="1" y="1" width="14" height="11" fill="#000" /><rect width="14" height="11" fill="#888" />
                    <rect x="1" y="1" width="4" height="4" fill="#f00" /><rect x="5" y="1" width="4" height="4" fill="#ff0" /><rect x="9" y="1" width="4" height="4" fill="#00f" />
                    <rect x="1" y="5" width="4" height="5" fill="#fff" /><rect x="5" y="5" width="4" height="5" fill="#888" /><rect x="9" y="5" width="4" height="5" fill="#000" />
                  </svg>
                  {menus.map(([t, ml, w, off]) => <MenuItem key={t} $ml={ml} $width={w} $off={off}>{t}</MenuItem>)}
                </MenuBar>
                <Canvas>
                  <Crystal />
                  <Dialog>
                    <DialogTitle>
                      <span />
                      <Text $size={14} $w={700} $ls={0.35}>Animation Control Center</Text>
                      <Circles>
                        <WinCircle kind="min" bg="#7b7972" fg="#3c3b37" /><WinCircle kind="max" bg="#7b7972" fg="#3c3b37" /><WinCircle kind="close" bg="#ee6239" fg="#5a2412" />
                      </Circles>
                    </DialogTitle>
                    <Ridge $h={174} $pt={7}>
                      <Field>Delay between slides (in msec):<Entry $width={124}>50</Entry></Field>
                      <Field>Animation step:<Entry $width={124}>1</Entry></Field>
                      <Current>Current slide: 54/54</Current>
                      <Player>
                        {[["end"], ["two"], ["one"], ["stop"], ["one", 1], ["two", 1], ["end", 1]].map(([k, f], i) => (
                          <Raised key={i} $width={37} $h={37}><PlayArrow kind={k} flip={f} /></Raised>
                        ))}
                      </Player>
                    </Ridge>
                    <Ridge $h={49} $pt={9}><Raised $width={392} $h={29} $pb={1}>Animated GIF/MPEG/AVI &gt;&gt;</Raised></Ridge>
                    <DialogActions>
                      <DefaultRing><Raised $width={64} $h={37}>Hide</Raised></DefaultRing>
                      <Raised $width={70} $h={37}>Close</Raised>
                    </DialogActions>
                  </Dialog>
                </Canvas>
                <BottomBar>
                  <InfoGroup>
                    <Gold $width={98} $h={30}>Atoms Info</Gold><Gold $width={84} $h={30}>Distance</Gold><Gold $width={64} $h={30}>Angle</Gold><Gold $width={82} $h={30}>Dihedral</Gold>
                  </InfoGroup>
                  <VSep $ml={3} $mr={1} />
                  <ToolIcon $line="#4848ff"><CubeIcon full /></ToolIcon>
                  <ToolIcon $line="#fff"><CubeIcon /></ToolIcon>
                  <VSep $ml={1} $mr={2} />
                  <ToolIcon $line="#f07070">
                    <svg width="28" height="27"><defs><radialGradient id="rb" cx=".35" cy=".4"><stop offset="0" stopColor="#d83a54" /><stop offset="1" stopColor="#7a0818" /></radialGradient><radialGradient id="yb" cx=".42" cy=".3" r=".7"><stop offset="0" stopColor="#ffff90" /><stop offset=".35" stopColor="#dcd428" /><stop offset="1" stopColor="#686400" /></radialGradient></defs><circle cx="9" cy="18" r="8" fill="url(#rb)" /><circle cx="19" cy="10" r="8.500" fill="url(#yb)" /></svg>
                  </ToolIcon>
                  <ToolIcon>
                    <svg width="28" height="27" fill="none"><g stroke="#a01020"><circle cx="9" cy="18" r="7.500" /><ellipse cx="9" cy="18" rx="3" ry="7.500" /><ellipse cx="9" cy="18" rx="7.500" ry="3" /></g><circle cx="18" cy="10" r="8" fill="#000" /><g stroke="#d8b820" strokeWidth="1.200"><circle cx="18" cy="10" r="8" /><ellipse cx="18" cy="10" rx="4" ry="8" /><ellipse cx="18" cy="10" rx="8" ry="4" /><path d="M10 10h16M18 2v16" /></g></svg>
                  </ToolIcon>
                  <ToolIcon>
                    <svg width="28" height="27"><path d="M9 18L19 9" stroke="#0a8020" strokeWidth="9" /><circle cx="9" cy="18" r="7.500" fill="#0a7824" /><circle cx="19" cy="9" r="7" fill="#0a7020" /><circle cx="9" cy="19" r="5" fill="#ff1010" /><circle cx="19" cy="8.500" r="4.800" fill="#00f4f4" /></svg>
                  </ToolIcon>
                  <ToolIcon $bg="#1a1a80" $line="#2a2ad0">
                    <svg width="32" height="30"><defs><pattern id="ck" width="2" height="2" patternUnits="userSpaceOnUse"><rect width="1" height="1" fill="#4a4ae8" /><rect x="1" y="1" width="1" height="1" fill="#4a4ae8" /></pattern></defs><rect width="32" height="30" fill="url(#ck)" /><text x="16" y="19" fontSize="10" textAnchor="middle" fill="#c4bc80" transform="rotate(-42 16 15)" fontFamily="DejaVu Sans">Stereo</text></svg>
                  </ToolIcon>
                  <VSep $ml={1} $mr={2} />
                  <ToolIcon $line="#30a030"><svg width="26" height="26"><circle cx="13" cy="13" r="11.500" fill="url(#yb)" /></svg></ToolIcon>
                  <ToolIcon><svg width="26" height="26"><circle cx="13" cy="13" r="11.500" fill="url(#yb)" /><path d="M13 13L17 2 24 9zM13 13L25 17 18 24z" fill="#b0a818" opacity=".6" /><path d="M13 13L3 7 9 3zM13 13L2 16" fill="#f4f060" opacity=".7" stroke="#a89e18" strokeWidth=".5" /></svg></ToolIcon>
                </BottomBar>
              </Left>
              <Right>
                <PanelRow>
                  <Panel>
                    <Groove $h={112} $mt={4} $pt={4}>
                      <NavPad>
                        <NavBtn $area="1 / 2"><NavArrow /></NavBtn>
                        <NavBtn $area="2 / 1"><Rot $deg={-90}><NavArrow /></Rot></NavBtn>
                        <NavBtn $area="2 / 2"><Target /></NavBtn>
                        <NavBtn $area="2 / 3"><Rot $deg={90}><NavArrow /></Rot></NavBtn>
                        <NavBtn $area="3 / 2"><Rot $deg={180}><NavArrow /></Rot></NavBtn>
                      </NavPad>
                    </Groove>
                    <Pair $mt={6}><Gold $width={60}>Zoom +</Gold><Gold $width={60}>Zoom -</Gold></Pair>
                    <Groove $h={110} $mt={8} $pt={7}>
                      <StepRow><StepLabel $width={73}>Translation Step:</StepLabel><Entry $width={30} $ls={-0.3}>0.05</Entry></StepRow>
                      <Caption $pr={58} $mt={11}>0.05</Caption>
                      <Trough $at={8}><Knob /><Knob /></Trough>
                      <Ticks $width={95}><span>0.00</span><span>0.25</span><span>0.50</span></Ticks>
                    </Groove>
                    <HSep $mt={6} />
                    <Pair $mt={1}><Gold $width={60}>Rot +X</Gold><Gold $width={60}>Rot -X</Gold></Pair>
                    <Pair $mt={2}><Gold $width={60}>Rot +Y</Gold><Gold $width={60}>Rot -Y</Gold></Pair>
                    <Pair $mt={2}><Gold $width={60}>Rot +Z</Gold><Gold $width={60}>Rot -Z</Gold></Pair>
                    <Groove $h={111} $mt={4} $pt={3}>
                      <Caption $pr={2}>Rotation+zoom</Caption><Caption $pr={2}>buttons mode:</Caption>
                      <Stack><Gold $width={94} $h={21} $size={11} $bg="#fff" $flat="#bbb">Discrete</Gold><Gold $width={94} $h={21} $size={11}>Click-and-hold</Gold><Gold $width={94} $h={21} $size={11}>Click-and-click</Gold></Stack>
                    </Groove>
                    <Groove $h={110} $mt={8} $pt={7}>
                      <StepRow $pr={1}><StepLabel $width={57}>Rotation Step:</StepLabel><Entry $width={44}>0</Entry></StepRow>
                      <Caption $mt={10} $pl={2}>0</Caption>
                      <Trough $at={37}><Knob /><Knob /></Trough>
                      <Ticks $width={100}><span>-180</span><span>0</span><span>180</span></Ticks>
                    </Groove>
                    <IconGrid>
                      {["down", "up", "left"].map((d) => <IconBtn key={d} $width={32} $h={32}><RoomIcon dir={d} /></IconBtn>)}
                      {["right", "down", "up"].map((d) => <IconBtn key={d} $width={32} $h={32}><SlabIcon kind={d} /></IconBtn>)}
                    </IconGrid>
                    <HSep $mt={4} />
                    <Groove $h={52} $mt={2} $pt={3}>
                      <Caption>Lighting:</Caption>
                      <Pair $mt={5}><Gold $width={31} $h={21} $size={11} $bg="#fff" $flat="#bbb">On</Gold><Gold $width={32} $h={21} $size={11}>Off</Gold></Pair>
                    </Groove>
                    <Groove $h={52} $mt={5} $pt={3}>
                      <Caption>Mode:</Caption>
                      <Pair $mt={5}><Gold $width={50} $h={21} $size={11} $bg="#4545ff">Preset</Gold><Gold $width={45} $h={21} $size={11}>Logic</Gold></Pair>
                    </Groove>
                    <MolGrid>
                      <MolCell><MolIcon s={0} /></MolCell><MolCell><MolIcon s={1} /></MolCell><MolCell $line="#30a030"><MolIcon s={2} /></MolCell><MolCell><MolIcon s={3} /></MolCell>
                    </MolGrid>
                  </Panel>
                  <Scroll>
                    <div>
                      <svg width="9" height="10"><rect width="9" height="10" fill="#d9d9d9" /><path d="M4.500 1L8 8.500H1z" fill="#d9d9d9" stroke="#828282" /><path d="M4.500 1L1 8.500" stroke="#fff" /></svg>
                      <Thumb />
                    </div>
                    <svg width="9" height="9"><rect width="9" height="9" fill="#d9d9d9" /><path d="M1 1H8L4.500 8z" fill="#fff" stroke="#828282" /></svg>
                  </Scroll>
                </PanelRow>
                <ExitRow><Gold $width={36}>F</Gold><Gold $width={51}>Maxi</Gold><Gold $width={43}>Exit</Gold></ExitRow>
              </Right>
            </WinBody>
          </MainWindow>
        </Guest>

        <Taskbar>
          <TaskCell>
            <svg width="16" height="16" fill="#fff"><path d="M0 2.300L6.500 1.400V7.500H0zM7.400 1.300L16 0V7.500H7.400zM0 8.400H6.500V14.600L0 13.700zM7.400 8.400H16V16L7.400 14.700z" /></svg>
          </TaskCell>
          <Search>
            <svg width="18" height="18" fill="none" stroke="#222" strokeWidth="1.300"><circle cx="11" cy="6.500" r="5.500" /><path d="M7 10.500L1 16.500" /></svg>
            <Text $size={15} $ls={-0.2}>Type here to search</Text>
          </Search>
          <TaskCell>
            <svg width="18" height="18" fill="none" stroke="#fff" strokeWidth="1.200"><path d="M1.500 5.500h9v7h-9zM1.500 0v2.500h9V0M1.500 18v-2.500h9V18M15.500 0v5M15.500 12v6" /><rect x="14.500" y="7" width="2" height="2.500" fill="#fff" stroke="none" /></svg>
          </TaskCell>
          <TaskCell $width={54}>
            <svg width="24" height="24" viewBox="0 0 24 24">
              <defs><linearGradient id="eg" x1="0" x2="1" y1=".2" y2=".5"><stop offset="0" stopColor="#25a8e8" /><stop offset=".6" stopColor="#35c8c8" /><stop offset="1" stopColor="#66e060" /></linearGradient></defs>
              <path d="M0 11A12 12 0 0 1 24 11C24 15 21 16.500 18 16.500S14 15 15 13.500C16 11 13 8 9 8S1 10 0 14z" fill="url(#eg)" />
              <path d="M0 12C1 8 9 7 12 10 9 11 8 15 11 18S18 21 22 18A12 12 0 0 1 12 24 12 12 0 0 1 0 12z" fill="#1272c8" />
              <path d="M9 11C6 14 7 20 13 23.500 18 24 21 20 22 18.500 17 21 9 18 9 11z" fill="#0c4a9a" />
            </svg>
          </TaskCell>
          <TaskCell $width={46}>
            <svg width="22" height="19"><path d="M0 1.500Q0 0 1.500 0H7l2 2.500H0z" fill="#e8a820" /><path d="M0 2H20.500Q22 2 22 3.500V18H0z" fill="#fcd462" /><path d="M4.500 19v-6Q4.500 10.500 7 10.500H15Q17.500 10.500 17.500 13V19H14V14.500H8V19z" fill="#3b9be0" /></svg>
          </TaskCell>
          <TaskCell $width={49} $on><VmLogo size={25} /></TaskCell>
          <Tray>
            <TrayCell $width={24}><svg width="13" height="8" fill="none" stroke="#fff" strokeWidth="1.300"><path d="M1 7l5.500-5.500L12 7" /></svg></TrayCell>
            <TrayCell $width={24}><svg width="17" height="14" fill="none" stroke="#fff"><path d="M5 2.500h11.500v8H6.500M10.500 10.500v3M7 13.500h7M.500 .500h4v4h-4zM2.500 4.500v9h3" /></svg></TrayCell>
            <TrayCell $width={24}><svg width="17" height="15" viewBox="0 0 17 15" fill="none" stroke="#fff"><path d="M.500 5.500H3L6.500 2v11L3 9.500H.500zM9 5q1.500 2.500 0 5M11.500 3.500q2.500 4 0 8M14 2q3.500 5.500 0 11" /></svg></TrayCell>
            <TrayCell $width={36}><Text $size={12} $ls={-0.3}>ENG</Text><Text $size={12} $ls={-0.5}>BEP</Text></TrayCell>
            <TrayCell $width={71}><Text $size={12} $ls={-0.5}>11:40</Text><Text $size={12} $ls={-0.4}>23/04/2024</Text></TrayCell>
            <TrayCell $width={39}><svg width="17" height="17" fill="none" stroke="#fff" strokeWidth="1.100"><path d="M.800 1.500h15.400v11.500H11L8.500 15.800 6 13H.800z" /></svg></TrayCell>
            <ShowDesk />
          </Tray>
        </Taskbar>
      </Screen>
    </>
  );
}
